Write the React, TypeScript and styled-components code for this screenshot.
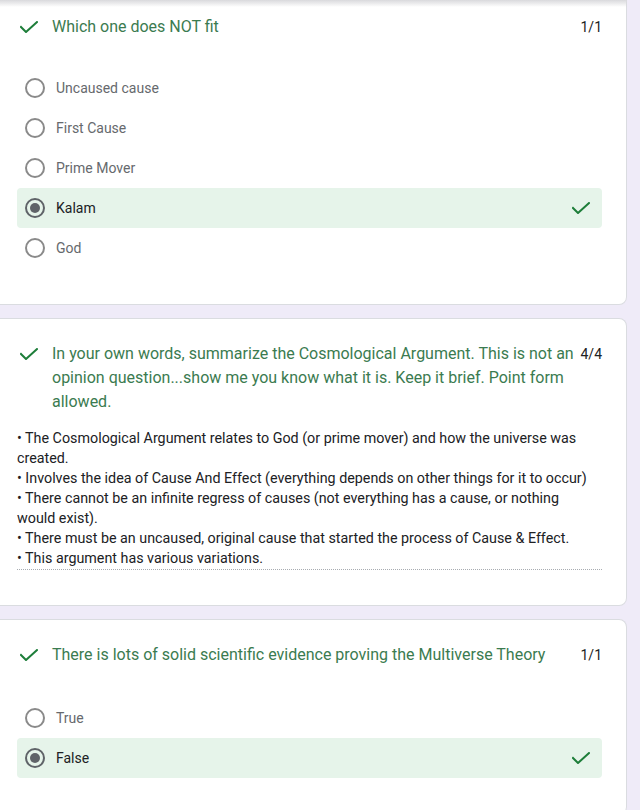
import React from "react";
import styled, { createGlobalStyle } from "styled-components";

const Global = createGlobalStyle`
  html, body { margin: 0; padding: 0; }
  body {
    background: #efebf8;
    font-family: Roboto, "Liberation Sans", Arial, sans-serif;
    overflow: hidden;
  }
`;

const TopShade = styled.div`
  position: fixed;
  top: 0;
  left: 0;
  right: 13px;
  height: 7px;
  background: linear-gradient(#d9d9dc, rgba(255, 255, 255, 0));
  pointer-events: none;
`;

const Page = styled.div`
  display: flex;
  flex-direction: column;
  gap: 13px;
  margin-top: -11px;
  padding-right: 13px;
  width: 627px;
`;

const Card = styled.section<{ $bottom: number }>`
  background: #fff;
  border: 1px solid #dadce0;
  border-left: none;
  border-radius: 0 8px 8px 0;
  padding: 23px 24px ${(p) => p.$bottom}px 17px;
  display: flex;
  flex-direction: column;
`;

const Header = styled.div<{ $offset?: number }>`
  display: flex;
  align-items: flex-start;
  margin-top: ${(p) => p.$offset ?? 0}px;
`;

const CheckBox = styled.div`
  width: 35px;
  flex: none;
  display: flex;
  align-items: center;
  height: 24px;
  padding-left: 3px;
  box-sizing: border-box;
`;

const Title = styled.div`
  flex: 1;
  color: #3b7b50;
  font-family: Roboto, "Liberation Sans", sans-serif;
  font-size: 16px;
  line-height: 24px;
  letter-spacing: 0;
`;

const Score = styled.div`
  flex: none;
  color: #202124;
  font-size: 14px;
  line-height: 24px;
  margin-left: 1px;
  min-width: 20px;
  text-align: right;
`;

const Options = styled.div<{ $gap: number }>`
  display: flex;
  flex-direction: column;
  margin-top: ${(p) => p.$gap}px;
`;

const Option = styled.div<{ $selected?: boolean }>`
  display: flex;
  align-items: center;
  height: 40px;
  border-radius: 4px;
  padding: 0 12px 0 8px;
  background: ${(p) => (p.$selected ? "#e6f4ea" : "transparent")};
`;

const Radio = styled.span<{ $checked?: boolean }>`
  width: 20px;
  height: 20px;
  box-sizing: border-box;
  border-radius: 50%;
  border: 2px solid ${(p) => (p.$checked ? "#5f6368" : "#8a8a8a")};
  display: flex;
  align-items: center;
  justify-content: center;
  flex: none;
  &::after {
    content: "";
    display: ${(p) => (p.$checked ? "block" : "none")};
    width: 10px;
    height: 10px;
    border-radius: 50%;
    background: #5f6368;
  }
`;

const OptionLabel = styled.span<{ $selected?: boolean }>`
  flex: 1;
  margin-left: 11px;
  font-size: 14px;
  color: ${(p) => (p.$selected ? "#202124" : "#66696d")};
`;

const Answer = styled.div`
  margin-top: 14px;
  font-size: 14.3px;
  line-height: 20px;
  color: #202124;
  border-bottom: 1px dotted #a8acb1;
  padding: 0 12px 1px 0;
`;

const Check = ({ size = 18 }: { size?: number }) => (
  <svg width={size} height={size * 0.67} viewBox="0 0 18 12" fill="none">
    <polyline
      points="1,6 6,11 17,1"
      stroke="#1e7e3a"
      strokeWidth="2"
      strokeLinecap="square"
    />
  </svg>
);

type Q = {
  title: string;
  score: string;
  options: string[];
  selected: number;
};

const MCQuestion = ({
  q,
  bottom,
  offset = 0,
}: {
  q: Q;
  bottom: number;
  offset?: number;
}) => (
  <Card $bottom={bottom}>
    <Header $offset={offset}>
      <CheckBox>
        <Check />
      </CheckBox>
      <Title>{q.title}</Title>
      <Score>{q.score}</Score>
    </Header>
    <Options $gap={31 - offset}>
      {q.options.map((o, i) => {
        const sel = i === q.selected;
        return (
          <Option key={o} $selected={sel}>
            <Radio $checked={sel} />
            <OptionLabel $selected={sel}>{o}</OptionLabel>
            {sel && <Check />}
          </Option>
        );
      })}
    </Options>
  </Card>
);

const answerLines = [
  "• The Cosmological Argument relates to God (or prime mover) and how the universe was created.",
  "• Involves the idea of Cause And Effect (everything depends on other things for it to occur)",
  "• There cannot be an infinite regress of causes (not everything has a cause, or nothing would exist).",
  "• There must be an uncaused, original cause that started the process of Cause & Effect.",
  "• This argument has various variations.",
];

export default function App() {
  return (
    <>
      <Global />
      <Page>
        <MCQuestion
          bottom={36}
          offset={2}
          q={{
            title: "Which one does NOT fit",
            score: "1/1",
            options: ["Uncaused cause", "First Cause", "Prime Mover", "Kalam", "God"],
            selected: 3,
          }}
        />
        <Card $bottom={35}>
          <Header>
            <CheckBox>
              <Check />
            </CheckBox>
            <Title>
              In your own words, summarize the Cosmological Argument. This is not an
              opinion question...show me you know what it is. Keep it brief. Point form
              allowed.
            </Title>
            <Score>4/4</Score>
          </Header>
          <Answer>
            {answerLines.map((l) => (
              <div key={l}>{l}</div>
            ))}
          </Answer>
        </Card>
        <MCQuestion
          bottom={36}
          q={{
            title: "There is lots of solid scientific evidence proving the Multiverse Theory",
            score: "1/1",
            options: ["True", "False"],
            selected: 1,
          }}
        />
      </Page>
      <TopShade />
    </>
  );
}
